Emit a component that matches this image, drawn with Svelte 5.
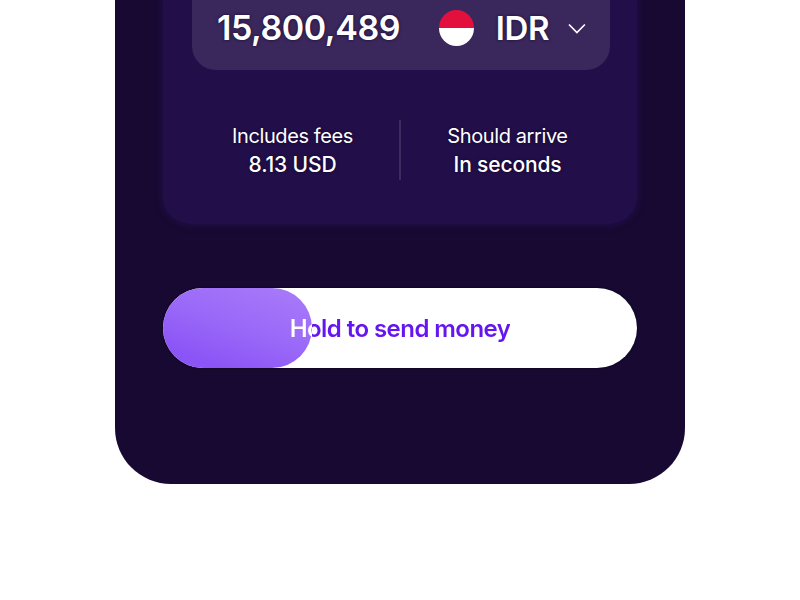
<script lang="ts">
	const label = 'Hold to send money';
</script>

<main class="phone">
	<section class="card">
		<div class="amount">
			<span class="amount__value">15,800,489</span>
			<span class="flag"></span>
			<span class="amount__currency">IDR</span>
			<svg class="chevron" width="18" height="11" viewBox="0 0 18 11" fill="none">
				<path d="M1 1.5 9 9.5l8-8" stroke="#fff" stroke-width="1.7" />
			</svg>
		</div>
		<div class="stats">
			<div class="stat">
				<span>Includes fees</span>
				<strong>8.13 USD</strong>
			</div>
			<div class="stat__divider"></div>
			<div class="stat">
				<span>Should arrive</span>
				<strong>In seconds</strong>
			</div>
		</div>
	</section>

	<button class="hold">
		<div class="hold__thumb"></div>
		<span class="hold__label">{label}</span>
	</button>
</main>

<style>
	:global(body) {
		background: #fff;
		font-family: Inter, 'Liberation Sans', sans-serif;
	}

	.phone {
		box-sizing: border-box;
		width: 570px;
		height: 484px;
		margin: 0 auto;
		padding: 0 48px;
		background: #170932;
		border-radius: 0 0 56px 56px;
		overflow: hidden;
	}

	.card {
		box-sizing: border-box;
		height: 224px;
		background: #220f4a;
		border-radius: 0 0 28px 28px;
		box-shadow: 0 0 7px 1px #220f4a;
		display: flex;
		flex-direction: column;
		align-items: center;
	}

	.amount {
		box-sizing: border-box;
		width: 418px;
		height: 70px;
		margin-left: 2px;
		padding: 0 24px 15px 25px;
		display: flex;
		align-items: center;
		background: #3a275b;
		border-radius: 0 0 24px 24px;
		color: #fff;
	}

	.amount__value {
		font-size: 34px;
		font-weight: 600;
		letter-spacing: -0.45px;
		text-shadow: 0 0 3px #170932;
	}

	.flag {
		width: 35px;
		height: 36px;
		margin-left: 39px;
		border-radius: 50%;
		background: linear-gradient(#e30f3c 50%, #fff 50%);
	}

	.amount__currency {
		margin-left: 22px;
		font-size: 33px;
		font-weight: 600;
		letter-spacing: -0.4px;
		text-shadow: 0 0 3px #170932;
	}

	.chevron {
		margin-left: 19px;
		margin-top: 1px;
	}

	.stats {
		width: 428px;
		margin-top: 50px;
		display: flex;
		align-items: center;
		color: #fff;
	}

	.stat {
		flex: 1;
		display: flex;
		flex-direction: column;
		align-items: center;
		gap: 3px;
		font-size: 20px;
		line-height: 26px;
		text-shadow: 0 0 3px #120627;
	}

	.stat span {
		letter-spacing: -0.4px;
	}

	.stat strong {
		font-size: 21px;
		font-weight: 500;
		letter-spacing: -0.15px;
	}

	.stat__divider {
		width: 2px;
		height: 60px;
		background: #3d2c5e;
	}

	.hold {
		position: relative;
		display: flex;
		align-items: center;
		justify-content: center;
		width: 474px;
		height: 80px;
		margin-top: 64px;
		padding: 0;
		border: 0;
		border-radius: 40px;
		background: #fff;
		box-shadow: 0 0 2px #05010f;
		font: 600 24px Inter, 'Liberation Sans', sans-serif;
		letter-spacing: -0.55px;
	}

	.hold__thumb {
		position: absolute;
		left: 0;
		top: 0;
		width: 149px;
		height: 80px;
		border-radius: 40px;
		background: linear-gradient(200deg, #a678f9 10%, #9a68f8 50%, #8a54f6 85%);
	}

	/* one label, white over the thumb and purple past its edge */
	.hold__label {
		position: relative;
		background: linear-gradient(90deg, #fff 22px, #6415f0 22px);
		background-clip: text;
		-webkit-background-clip: text;
		color: transparent;
	}
</style>
